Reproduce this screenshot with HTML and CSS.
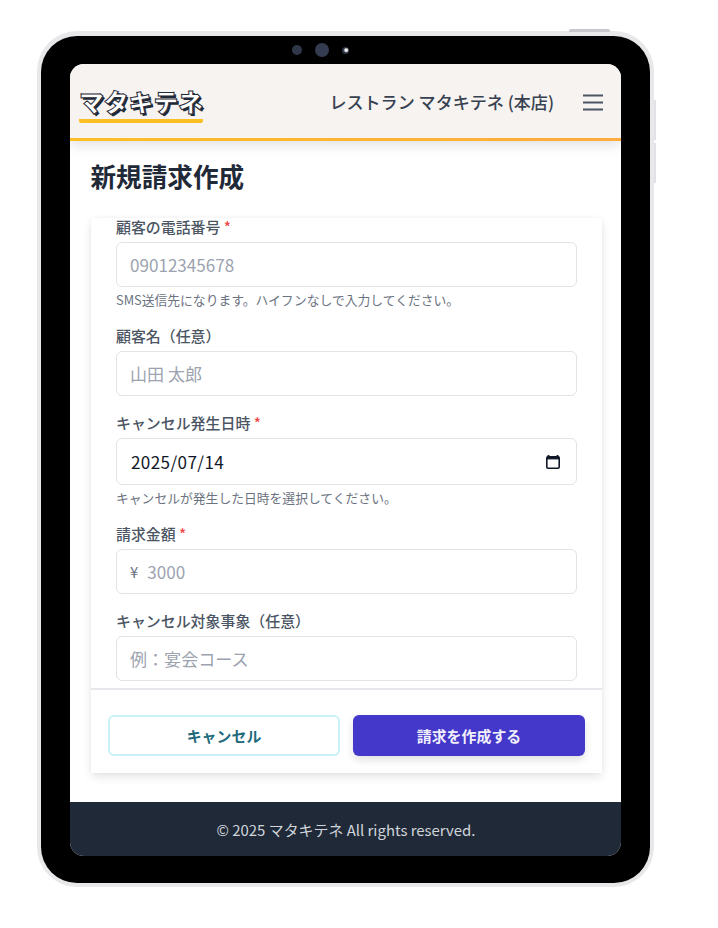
FILE: index.html
```html
<!DOCTYPE html>
<html lang="ja">
<head>
<meta charset="utf-8">
<title>新規請求作成</title>
<link rel="stylesheet" href="styles.css">
</head>
<body>
<div class="device">
  <span class="btn-top"></span>
  <span class="btn-side one"></span>
  <span class="btn-side two"></span>
  <div class="bezel">
    <div class="cams">
      <span class="cam small"></span>
      <span class="cam big"></span>
      <span class="cam dot"></span>
    </div>
    <div class="screen">
      <header class="top">
        <div class="logo">マタキテネ</div>
        <div class="top-right">
          <span class="shop">レストラン マタキテネ (本店)</span>
          <svg class="menu" width="20" height="17" viewBox="0 0 20 17"><path d="M0 1.5h20M0 8.5h20M0 15.5h20" fill="none" stroke="#4b5563" stroke-width="1.8"/></svg>
        </div>
      </header>
      <main class="main">
        <h1 class="title">新規請求作成</h1>
        <section class="card">
          <div class="scroll">
            <div class="field">
              <label class="label">顧客の電話番号 <span class="req">*</span></label>
              <input class="input" type="text" placeholder="09012345678">
              <p class="help">SMS送信先になります。ハイフンなしで入力してください。</p>
            </div>
            <div class="field">
              <label class="label">顧客名（任意）</label>
              <input class="input" type="text" placeholder="山田 太郎">
            </div>
            <div class="field">
              <label class="label">キャンセル発生日時 <span class="req">*</span></label>
              <div class="input date">
                <span class="date-text">2025/07/14</span>
                <svg width="16" height="16" viewBox="0 0 16 16"><path d="M3.5 1v2M12.5 1v2" stroke="#111827" stroke-width="1.8" fill="none"/><rect x="1.8" y="2.8" width="12.4" height="11.4" rx="1.2" fill="none" stroke="#111827" stroke-width="1.6"/><rect x="1.8" y="2.8" width="12.4" height="2.6" fill="#111827"/></svg>
              </div>
              <p class="help">キャンセルが発生した日時を選択してください。</p>
            </div>
            <div class="field">
              <label class="label">請求金額 <span class="req">*</span></label>
              <div class="input money">
                <span class="yen">¥</span>
                <input class="bare" type="text" placeholder="3000">
              </div>
            </div>
            <div class="field">
              <label class="label">キャンセル対象事象（任意）</label>
              <input class="input" type="text" placeholder="例：宴会コース">
            </div>
          </div>
          <div class="actions">
            <button class="btn ghost" type="button">キャンセル</button>
            <button class="btn primary" type="button">請求を作成する</button>
          </div>
        </section>
      </main>
      <footer class="foot">© 2025 マタキテネ All rights reserved.</footer>
    </div>
  </div>
</div>
</body>
</html>
```
FILE: styles.css
```css
* { box-sizing: border-box; }
html, body { margin: 0; height: 100%; background: #fff; }
body {
  padding: 31px 0 0 37px;
  font-family: "Noto Sans CJK JP", "Noto Sans", sans-serif;
  overflow: hidden;
}
.device {
  position: relative;
  width: 617px;
  height: 856px;
  padding: 5px 4px 4px;
  background: #e8e8ea;
  border-radius: 40px;
}
.btn-top { position: absolute; top: -2px; left: 532px; width: 41px; height: 3px; background: #c8c8cc; border-radius: 2px 2px 0 0; }
.btn-side { position: absolute; left: 617px; width: 2px; background: #e1e2e8; }
.btn-side.one { top: 69px; height: 40px; }
.btn-side.two { top: 112px; height: 40px; }
.bezel {
  position: relative;
  height: 100%;
  padding: 28px 29px 27px;
  background: #000;
  border-radius: 36px;
}
.cams { position: absolute; top: 6px; left: 251px; display: flex; align-items: center; gap: 13px; height: 16px; }
.cam { display: block; border-radius: 50%; background: #2f3748; }
.cam.small { width: 10px; height: 10px; }
.cam.big { width: 14px; height: 14px; background: #333c50; }
.cam.dot { width: 7px; height: 7px; background: radial-gradient(circle at 60% 45%, #eee 0 22%, #2f3748 45%); }
.screen {
  height: 100%;
  display: flex;
  flex-direction: column;
  background: #fff;
  border-radius: 14px;
  overflow: hidden;
}
.top {
  flex: none;
  height: 77px;
  padding: 0 18px 0 9px;
  display: flex;
  align-items: center;
  justify-content: space-between;
  background: #f6f3f0;
  border-bottom: 3px solid;
  border-image: linear-gradient(90deg, #fbbf24, #fdab3e) 1;
  box-shadow: 0 4px 12px rgba(0, 0, 0, 0.12);
  position: relative;
}
.logo {
  font-size: 24.8px;
  line-height: 32px;
  font-weight: 900;
  color: #fff;
  -webkit-text-stroke: 1px #1f2937;
  text-shadow: 2px 2px 0 #1f2937;
  border-bottom: 4.5px solid #fbbf24;
  border-radius: 0 0 2px 2px;
  padding-bottom: 2px;
  margin-top: 6px;
}
.top-right { display: flex; align-items: center; gap: 29px; padding-top: 2px; }
.shop { font-size: 17.07px; font-weight: 500; color: #374151; line-height: 24px; }
.menu { display: block; }
.main { flex: 1; min-height: 0; padding: 18px 19px 29px 21px; display: flex; flex-direction: column; }
.title { flex: none; margin: 0 0 25px -0.5px; font-size: 25.6px; line-height: 34px; font-weight: 700; color: #1f2937; }
.card {
  flex: 1;
  min-height: 0;
  display: flex;
  flex-direction: column;
  background: #fff;
  border-radius: 4px;
  box-shadow: 0 4px 10px rgba(0, 0, 0, 0.1), 0 0 4px rgba(0, 0, 0, 0.04);
}
.scroll { flex: 1; min-height: 0; padding: 0 25px; }
.field { margin-bottom: 18px; }
.field:last-child { margin-bottom: 0; }
.label { display: block; height: 24px; font-size: 14.93px; line-height: 18px; font-weight: 500; color: #4b5563; }
.req { color: #ef4444; }
.input {
  display: block;
  width: 100%;
  height: 45px;
  padding: 0 13px;
  font: inherit;
  font-size: 17.07px;
  color: #111827;
  background: #fff;
  border: 1.5px solid #e2e3e8;
  border-radius: 6px;
  outline: none;
}
.input::placeholder, .bare::placeholder { color: #9ca3af; opacity: 1; }
.date { height: 47px; display: flex; align-items: center; justify-content: space-between; padding-right: 15px; }
.date-text { letter-spacing: 0.4px; margin-left: 1px; }
.money { display: flex; align-items: center; gap: 9px; }
.yen { color: #6b7280; font-size: 14.93px; }
.bare { flex: 1; min-width: 0; padding: 0; border: 0; outline: 0; font: inherit; background: transparent; }
.help { margin: 0; padding-top: 4px; font-size: 12.8px; line-height: 18px; color: #6b7280; }
.actions {
  flex: none;
  height: 85px;
  padding: 25px 17px 17px;
  display: grid;
  grid-template-columns: 1fr 1fr;
  gap: 13px;
  border-top: 2px solid #e5e7eb;
  background: #fff;
}
.btn { height: 41px; padding: 0; font: inherit; font-size: 14.93px; font-weight: 700; border-radius: 6px; }
.ghost { color: #1f6b7c; background: #fff; border: 2px solid #c9f2f8; }
.primary { color: #f1effb; background: #4338ca; border: 0; box-shadow: 0 4px 8px rgba(0, 0, 0, 0.12); }
.foot {
  flex: none;
  height: 54px;
  padding-left: 1px;
  display: flex;
  align-items: center;
  justify-content: center;
  font-size: 14.93px;
  color: #d1d5db;
  background: #1f2937;
}
```
